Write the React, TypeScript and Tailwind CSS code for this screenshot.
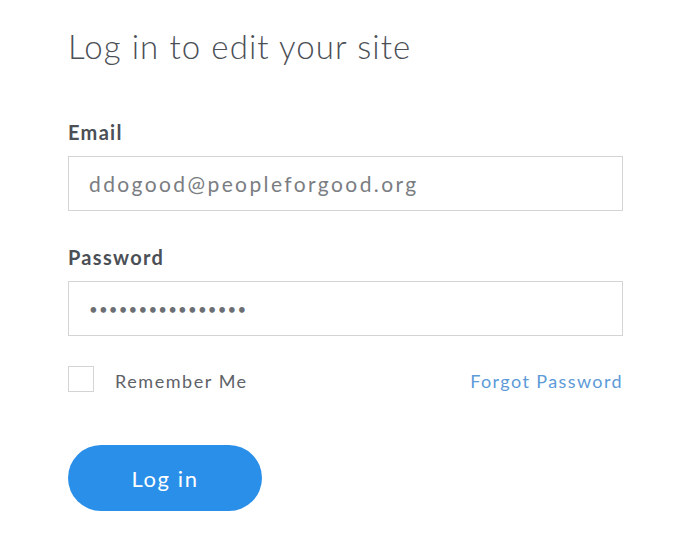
import React from "react";

export default function App() {
  return (
    <div className="min-h-screen bg-white font-['Lato',sans-serif]">
      <div className="ml-[68px] w-[555px] pt-[24px]">
        <h1 className="text-[33px] font-light leading-[44px] tracking-[1.1px] text-[#4b4f56]">
          Log in to edit your site
        </h1>

        <form className="mt-[52px] flex flex-col">
          <label className="text-[20px] font-bold leading-[24px] tracking-[1.3px] text-[#4b4f56]">Email</label>
          <input
            type="text"
            defaultValue="ddogood@peopleforgood.org"
            className="mt-[12px] h-[55px] w-full border border-[#d4d4d4] px-[20px] text-[21px] tracking-[2.4px] text-[#7a7d82] outline-none"
          />

          <label className="mt-[34px] text-[20px] font-bold leading-[24px] tracking-[1.3px] text-[#4b4f56]">Password</label>
          <input
            type="password"
            defaultValue="abcdefghijklmnop"
            className="mt-[12px] h-[55px] w-full border border-[#d4d4d4] px-[20px] text-[15px] tracking-[1.2px] text-[#6b6e72] outline-none"
          />

          <div className="mt-[30px] flex h-[26px] items-center justify-between">
            <label className="flex items-center gap-[21px]">
              <span className="h-[26px] w-[26px] border border-[#d4d4d4] bg-white" />
              <span className="h-[26px] pt-[4px] text-[18px] leading-[22px] tracking-[1.55px] text-[#5e6267]">Remember Me</span>
            </label>
            <a href="#" className="h-[26px] pt-[4px] text-[18px] leading-[22px] tracking-[1.4px] text-[#5d9ad8]">Forgot Password</a>
          </div>

          <button
            type="button"
            className="mt-[53px] h-[66px] w-[194px] rounded-full bg-[#2a8fe8] text-[22px] tracking-[1.6px] text-white"
          >
            Log in
          </button>
        </form>
      </div>
    </div>
  );
}
